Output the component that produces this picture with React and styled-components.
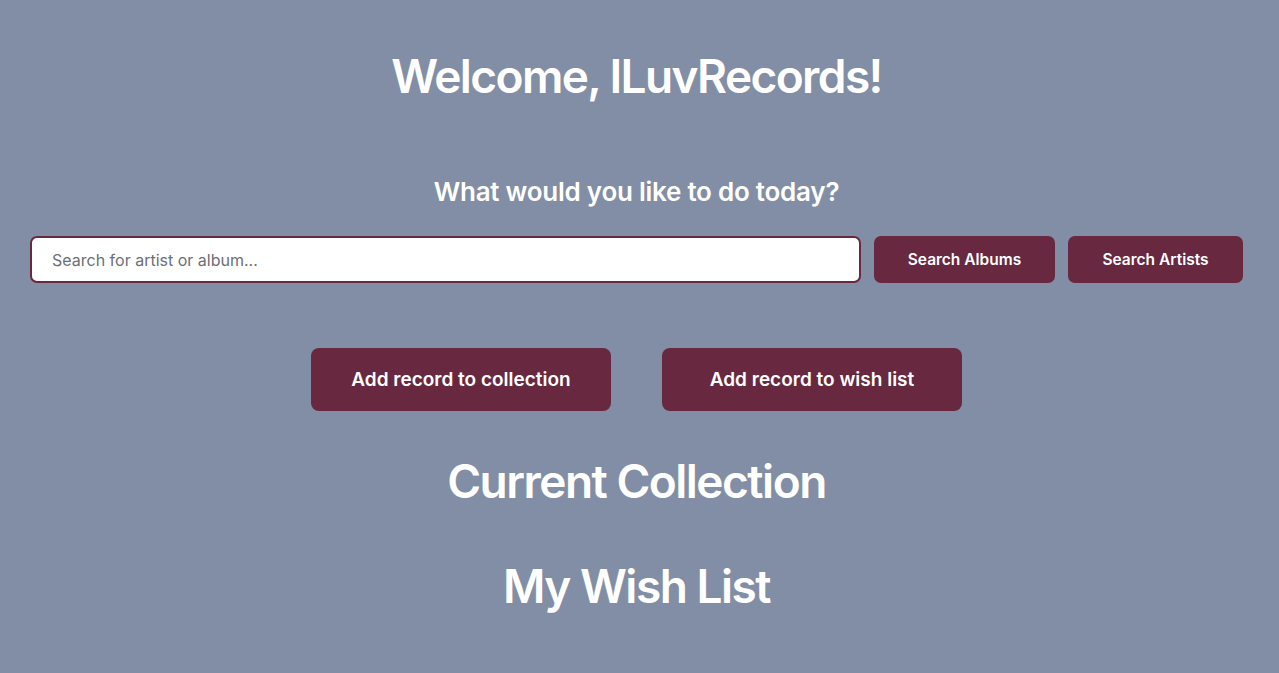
import React from "react";
import styled, { createGlobalStyle } from "styled-components";

const Global = createGlobalStyle`
  html, body {
    margin: 0;
    padding: 0;
    background: #828ea5;
    font-family: Inter, "Noto Sans", sans-serif;
  }
`;

const Page = styled.div`
  min-height: 673px;
  background: #828ea5;
  padding: 0 36px 0 30px;
  box-sizing: border-box;
  display: flex;
  flex-direction: column;
  align-items: center;
  color: #fff;
`;

const Title = styled.h1`
  margin: 48px 0 0;
  font-size: 46px;
  font-weight: 600;
  line-height: 56px;
  letter-spacing: -1.6px;
`;

const Subtitle = styled.h2`
  margin: 72px 0 0;
  font-size: 26px;
  font-weight: 600;
  line-height: 32px;
  letter-spacing: -0.25px;
`;

const SearchRow = styled.form`
  margin-top: 28px;
  width: 100%;
  display: flex;
  gap: 13px;
  align-items: stretch;
`;

const SearchInput = styled.input`
  flex: 1;
  height: 47px;
  box-sizing: border-box;
  border: 2px solid #672840;
  border-radius: 7px;
  background: #fff;
  padding: 0 20px;
  font-family: Inter, "Noto Sans", sans-serif;
  font-size: 16px;
  color: #333;
  outline: none;

  &::placeholder {
    color: #6b6f76;
  }
`;

const Button = styled.button`
  background: #672840;
  color: #fff;
  border: none;
  border-radius: ${(p) => (p.$big ? "8px" : "7px")};
  font-family: Inter, "Noto Sans", sans-serif;
  font-weight: 600;
  font-size: ${(p) => (p.$big ? "19px" : "15.5px")};
  letter-spacing: 0;
  width: ${(p) => p.$w}px;
  height: ${(p) => (p.$big ? 63 : 47)}px;
  cursor: pointer;
`;

const ActionRow = styled.div`
  margin-top: 65px;
  display: flex;
  gap: 51px;
`;

const SectionTitle = styled.h2`
  margin: ${(p) => p.$top}px 0 0;
  font-size: 46px;
  font-weight: 600;
  line-height: 56px;
  letter-spacing: -1.5px;
`;

export default function App() {
  return (
    <Page>
      <Global />
      <Title>Welcome, ILuvRecords!</Title>
      <Subtitle>What would you like to do today?</Subtitle>
      <SearchRow onSubmit={(e) => e.preventDefault()}>
        <SearchInput placeholder="Search for artist or album..." />
        <Button $w={181}>Search Albums</Button>
        <Button $w={175}>Search Artists</Button>
      </SearchRow>
      <ActionRow>
        <Button $big $w={300}>Add record to collection</Button>
        <Button $big $w={300}>Add record to wish list</Button>
      </ActionRow>
      <SectionTitle $top={42}>Current Collection</SectionTitle>
      <SectionTitle $top={49}>My Wish List</SectionTitle>
    </Page>
  );
}
